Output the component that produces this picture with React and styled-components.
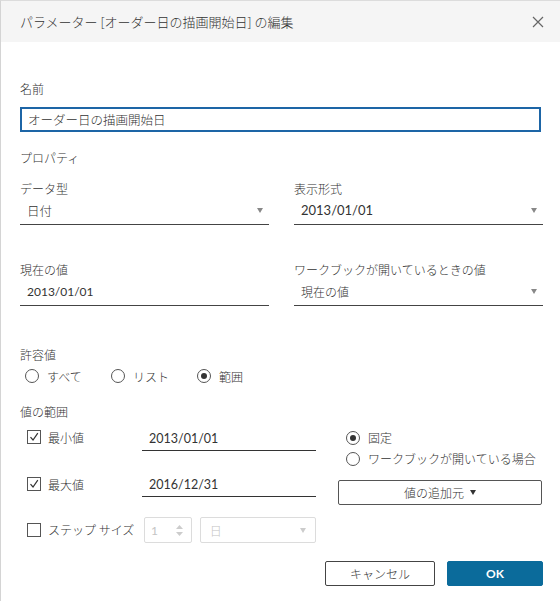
import React from 'react';
import styled, { createGlobalStyle } from 'styled-components';

const GlobalStyle = createGlobalStyle`
  html, body {
    margin: 0;
    padding: 0;
    background: #ffffff;
  }
  body {
    font-family: "Lato", "Noto Sans CJK JP", sans-serif;
    color: #333333;
  }
`;

const cjk = '"Noto Sans CJK JP", sans-serif';

const Dialog = styled.div`
  width: 560px;
  height: 601px;
  box-sizing: border-box;
  border-left: 1px solid #d4d4d4;
  border-top: 1px solid #dcdcdc;
  background: #ffffff;
  display: flex;
  flex-direction: column;
`;

const Header = styled.div`
  height: 41px;
  background: #f5f5f5;
  display: flex;
  align-items: center;
  justify-content: space-between;
  padding: 0 16px 0 19px;
`;

const Title = styled.div`
  font-size: 13px;
  color: #333;
  font-weight: 300;
  font-family: ${cjk};
`;

const Close = styled.button`
  border: none;
  background: none;
  padding: 0;
  width: 12px;
  height: 12px;
  display: flex;
  color: #666;
`;

const Body = styled.div`
  padding: 0 19px 0 19px;
  display: flex;
  flex-direction: column;
`;

const Label = styled.div`
  font-size: 12px;
  line-height: 18px;
  height: 18px;
  margin-top: ${p => p.$top || 0}px;
  font-family: ${cjk};
  font-weight: 300;
  color: #333;
`;

const NameInput = styled.div`
  margin-top: 9px;
  height: 25px;
  box-sizing: border-box;
  border: 2px solid #1d65a6;
  width: 521px;
  display: flex;
  align-items: center;
  padding-left: 6px;
  font-size: 12.5px;
  font-weight: 300;
  font-family: ${cjk};
`;

const FieldGrid = styled.div`
  display: grid;
  grid-template-columns: 249px 249px;
  column-gap: 25px;
  margin-top: ${p => p.$top}px;
`;

const Field = styled.div`
  display: flex;
  flex-direction: column;
`;

const Select = styled.div`
  height: 27px;
  box-sizing: border-box;
  border-bottom: 1px solid #444;
  display: flex;
  align-items: center;
  justify-content: space-between;
  padding: 0 6px 2px 7px;
  font-size: ${p => p.$size || 12}px;
  font-family: "Lato", "Noto Sans CJK JP", sans-serif;
`;

const CjkText = styled.span`
  font-family: ${cjk};
  font-weight: 300;
`;

const Arrow = styled.span`
  width: 0;
  height: 0;
  border-left: 3.5px solid transparent;
  border-right: 3.5px solid transparent;
  border-top: 5px solid ${p => p.$color || '#888'};
  display: inline-block;
`;

const RadioRow = styled.div`
  display: flex;
  margin-top: 3px;
  padding-left: 5px;
  height: 18px;
  align-items: center;
`;

const RadioItem = styled.label`
  display: flex;
  align-items: center;
  gap: 8px;
  width: ${p => p.$w || 'auto'};
  font-size: 12px;
  font-weight: 300;
  font-family: ${cjk};
  height: ${p => p.$h || 18}px;
`;

const RadioCircle = styled.span`
  width: 12px;
  height: 12px;
  border: 1px solid #555;
  border-radius: 50%;
  display: flex;
  align-items: center;
  justify-content: center;
  flex-shrink: 0;
  &::after {
    content: '';
    display: ${p => (p.$on ? 'block' : 'none')};
    width: 6px;
    height: 6px;
    border-radius: 50%;
    background: #333;
  }
`;

const RangeRow = styled.div`
  display: grid;
  grid-template-columns: 122px 174px 1fr;
  column-gap: 0;
  margin-top: ${p => p.$top}px;
  align-items: start;
`;

const CheckItem = styled.label`
  display: flex;
  align-items: center;
  gap: 7px;
  padding-left: 7px;
  height: ${p => p.$h || 20}px;
  font-size: 12px;
  font-weight: 300;
  font-family: ${cjk};
  white-space: nowrap;
`;

const CheckBox = styled.span`
  width: 12px;
  height: 12px;
  border: 1px solid #555;
  display: flex;
  align-items: center;
  justify-content: center;
  flex-shrink: 0;
  background: #fff;
`;

const ValueField = styled.div`
  height: 24px;
  box-sizing: border-box;
  border-bottom: 1px solid #333;
  display: flex;
  align-items: center;
  padding: 0 0 1px 7px;
  font-size: 12.5px;
`;

const RightCol = styled.div`
  padding-left: 24px;
  display: flex;
  flex-direction: column;
`;

const RadioStack = styled.div`
  display: flex;
  flex-direction: column;
  padding-left: 6px;
`;

const AddButton = styled.button`
  margin-top: 7px;
  height: 25px;
  width: 204px;
  margin-left: -2px;
  box-sizing: border-box;
  border: 1px solid #555;
  border-radius: 2px;
  background: #fff;
  display: flex;
  align-items: center;
  justify-content: center;
  gap: 6px;
  font-size: 12px;
  font-weight: 300;
  color: #333;
  font-family: ${cjk};
`;

const StepControls = styled.div`
  display: flex;
  gap: 8px;
  padding-left: 2px;
`;

const Spinner = styled.div`
  width: 48px;
  height: 26px;
  box-sizing: border-box;
  border: 1px solid #dcdcdc;
  border-radius: 2px;
  display: flex;
  align-items: center;
  justify-content: space-between;
  padding: 0 8px 0 6px;
  color: #c4c4c4;
  font-size: 12px;
`;

const SpinArrows = styled.div`
  display: flex;
  flex-direction: column;
  gap: 3px;
`;

const DisabledSelect = styled.div`
  width: 117px;
  height: 26px;
  box-sizing: border-box;
  border: 1px solid #dcdcdc;
  border-radius: 2px;
  display: flex;
  align-items: center;
  justify-content: space-between;
  padding: 0 9px 0 9px;
  color: #c4c4c4;
  font-size: 12px;
  font-weight: 300;
  font-family: ${cjk};
`;

const Footer = styled.div`
  display: flex;
  justify-content: flex-end;
  gap: 12px;
  margin-top: 18px;
  margin-right: -2px;
`;

const Button = styled.button`
  height: 25px;
  width: ${p => p.$w}px;
  box-sizing: border-box;
  border-radius: 2px;
  border: 1px solid ${p => (p.$primary ? '#0b6b9b' : '#444')};
  background: ${p => (p.$primary ? '#0b6b9b' : '#fff')};
  color: ${p => (p.$primary ? '#fff' : '#333')};
  font-weight: ${p => (p.$primary ? 700 : 300)};
  font-size: 12px;
  font-family: ${p => (p.$primary ? '"Lato", sans-serif' : cjk)};
  padding: 0;
`;

const Check = () => (
  <svg width="10" height="10" viewBox="0 0 10 10">
    <path d="M1.5 5.2 L4 8 L8.8 1.2" fill="none" stroke="#333" strokeWidth="1.2" />
  </svg>
);

const App = () => (
  <>
    <GlobalStyle />
    <Dialog>
      <Header>
        <Title>パラメーター [オーダー日の描画開始日] の編集</Title>
        <Close aria-label="閉じる">
          <svg width="12" height="12" viewBox="0 0 12 12">
            <path d="M1 1 L11 11 M11 1 L1 11" stroke="#666" strokeWidth="1.2" />
          </svg>
        </Close>
      </Header>
      <Body>
        <Label $top={38}>名前</Label>
        <NameInput>オーダー日の描画開始日</NameInput>
        <Label $top={17}>プロパティ</Label>

        <FieldGrid $top={13}>
          <Field>
            <Label>データ型</Label>
            <Select $size={12.5}>
              <CjkText>日付</CjkText>
              <Arrow />
            </Select>
          </Field>
          <Field>
            <Label>表示形式</Label>
            <Select $size={13}>
              <span>2013/01/01</span>
              <Arrow />
            </Select>
          </Field>
        </FieldGrid>

        <FieldGrid $top={36}>
          <Field>
            <Label>現在の値</Label>
            <Select $size={12}>
              <span>2013/01/01</span>
            </Select>
          </Field>
          <Field>
            <Label>ワークブックが開いているときの値</Label>
            <Select $size={12}>
              <CjkText>現在の値</CjkText>
              <Arrow />
            </Select>
          </Field>
        </FieldGrid>

        <Label $top={40}>許容値</Label>
        <RadioRow>
          <RadioItem $w="86px"><RadioCircle />すべて</RadioItem>
          <RadioItem $w="86px"><RadioCircle />リスト</RadioItem>
          <RadioItem><RadioCircle $on />範囲</RadioItem>
        </RadioRow>

        <Label $top={18}>値の範囲</Label>

        <RangeRow $top={6}>
          <CheckItem><CheckBox><Check /></CheckBox>最小値</CheckItem>
          <ValueField>2013/01/01</ValueField>
          <RightCol>
            <RadioStack>
              <RadioItem $h={21}><RadioCircle $on />固定</RadioItem>
              <RadioItem $h={21}><RadioCircle />ワークブックが開いている場合</RadioItem>
            </RadioStack>
          </RightCol>
        </RangeRow>

        <RangeRow $top={4}>
          <CheckItem $h={22}><CheckBox><Check /></CheckBox>最大値</CheckItem>
          <ValueField>2016/12/31</ValueField>
          <RightCol>
            <AddButton>値の追加元 <Arrow $color="#333" /></AddButton>
          </RightCol>
        </RangeRow>

        <RangeRow $top={12}>
          <CheckItem $h={25}><CheckBox />ステップ サイズ</CheckItem>
          <StepControls>
            <Spinner>
              <span>1</span>
              <SpinArrows>
                <svg width="7" height="4" viewBox="0 0 7 4"><path d="M0 4 L3.5 0 L7 4 Z" fill="#ccc" /></svg>
                <svg width="7" height="4" viewBox="0 0 7 4"><path d="M0 0 L3.5 4 L7 0 Z" fill="#ccc" /></svg>
              </SpinArrows>
            </Spinner>
            <DisabledSelect>
              <CjkText>日</CjkText>
              <Arrow $color="#ccc" />
            </DisabledSelect>
          </StepControls>
          <div />
        </RangeRow>

        <Footer>
          <Button $w={110}>キャンセル</Button>
          <Button $w={96} $primary>OK</Button>
        </Footer>
      </Body>
    </Dialog>
  </>
);

export default App;
